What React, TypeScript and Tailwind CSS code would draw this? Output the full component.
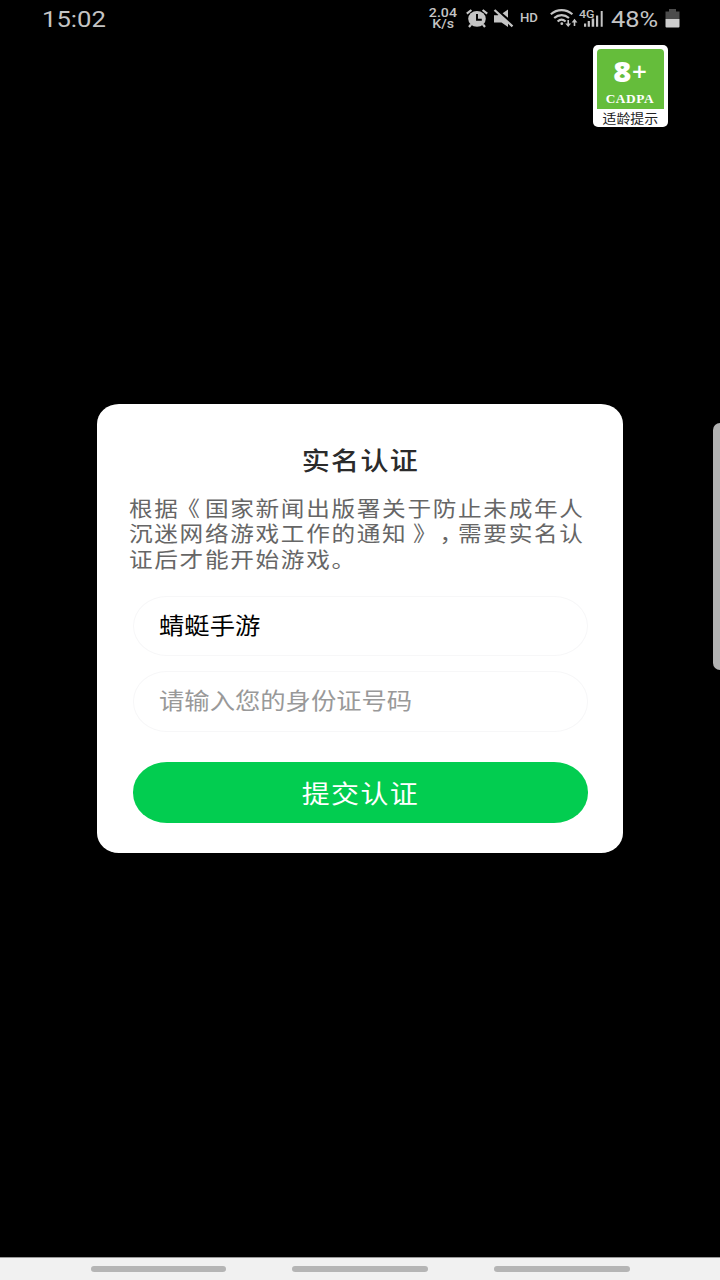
import { useState } from 'react'
import type { ReactNode } from 'react'

const NAV_KEYS = ['recents', 'home', 'back']

function StatusBar() {
  return (
    <header className="flex h-[38px] shrink-0 items-center pl-[42px] font-[Roboto,sans-serif] text-[#c4c4c4]">
      <span className="w-[386px] text-[22.5px] leading-none">
        <span className="inline-block origin-left scale-x-[1.14]">15:02</span>
      </span>
      <span className="mr-[3px] flex w-[30px] flex-col items-center text-[12px] leading-[11px] font-medium">
        <span className="inline-block scale-x-[1.18]">2.04</span>
        <span className="inline-block scale-x-[1.18]">K/s</span>
      </span>
      {/* Alarm */}
      <svg className="ml-[5px] h-[20px] w-[22px]" viewBox="0 0 22 20">
        <ellipse cx="11" cy="9.8" rx="8.8" ry="7.9" fill="#c4c4c4" />
        <path d="M.8 4.6 5.4 1M21.2 4.6 16.6 1M5 15.5 3 18M17 15.5 19 18" stroke="#c4c4c4" strokeWidth="2.2" />
        <path d="M11 5v5.8h4.8" fill="none" stroke="#000" strokeWidth="1.9" />
      </svg>
      {/* Muted speaker */}
      <svg className="ml-[5px] h-[20px] w-[21px]" viewBox="0 0 21 20">
        <path d="M1 6.3h4l1-.8 9 8V18l-6.5-4.6H1zM9.6 4.2 15 .4v8.4z" fill="#c4c4c4" />
        <path d="M1.5 1 19.5 17.3" stroke="#c4c4c4" strokeWidth="2.3" />
      </svg>
      <span className="ml-[6px] w-[30px] text-[12px] leading-none font-medium">
        <span className="inline-block origin-left -translate-y-px scale-x-[1.1]">HD</span>
      </span>
      {/* Wi-Fi */}
      <svg className="h-[20px] w-[28px]" viewBox="0 0 28 20" fill="none" stroke="#c4c4c4">
        <path d="M.8 5.2c6.4-5.4 15.2-5.4 21.6 0M4.2 9c4.4-3.8 10.4-3.8 14.8 0M7.6 12.4c2.4-2.2 5.6-2.2 8 0" strokeWidth="2.1" />
        <circle cx="11.8" cy="14.7" r="1.4" fill="#c4c4c4" stroke="none" />
        <path d="M18.2 11v5.2M24.5 17v-5.2" strokeWidth="1.6" />
        <path d="M15.3 14.4h5.8l-2.9 3.6zM21.6 13.4h5.8l-2.9-3.6z" fill="#c4c4c4" stroke="none" />
      </svg>
      {/* Mobile signal */}
      <svg className="ml-px h-[20px] w-[27px] overflow-visible" viewBox="0 0 27 20">
        <text x="0" y="8.8" fill="#c4c4c4" fontSize="11.5" fontWeight="500" fontFamily="Roboto, sans-serif" textLength="15.5" lengthAdjust="spacingAndGlyphs">4G</text>
        <path d="M5 14.5h2.2v3.3H5zM8.7 12h2.2v5.8H8.7zM12.7 9.6h2.5v8.2h-2.5zM17 6.5h2.2v11.3H17zM21.7 2h2v15.8h-2z" fill="#c4c4c4" />
      </svg>
      <span className="ml-[5px] w-[54px] text-[22.5px] leading-none">
        <span className="inline-block origin-left scale-x-[1.13]">48%</span>
      </span>
      {/* Battery */}
      <svg className="h-[20px] w-[15px]" viewBox="0 0 15 20">
        <path d="M4 0h7v2.5h3.5V10H.5V2.5H4z" fill="#4c4c4c" />
        <path d="M.5 10h14v7.6a1 1 0 0 1-1 1h-12a1 1 0 0 1-1-1z" fill="#cdcdcd" />
      </svg>
    </header>
  )
}

function AgeBadge() {
  return (
    <div className="mt-[7px] mr-[52px] flex h-[82px] w-[75.5px] flex-col items-center self-end rounded-[5px] bg-white px-[4px] pt-[4px]">
      <div className="flex h-[60px] w-full flex-col items-center rounded-t-[4px] bg-[#65bd3b] text-white">
        <div className="flex h-[44px] items-center font-['Open_Sans',sans-serif] leading-none">
          <span className="mr-[2px] inline-block scale-x-[1.1] text-[28px] font-extrabold">8</span>
          <span className="text-[26px] leading-[22px] font-semibold">+</span>
        </div>
        <span className="scale-x-[1.16] font-['Liberation_Serif',serif] text-[11.5px] leading-[12px] font-bold tracking-[0.5px]">CADPA</span>
      </div>
      <span className="scale-x-[1.1] font-['Noto_Sans_CJK_SC',sans-serif] text-[12.7px] leading-[18px] whitespace-nowrap text-[#222]">适龄提示</span>
    </div>
  )
}

function NoticeLine({ children }: { children: ReactNode }) {
  return (
    <span className="block origin-left scale-x-[1.125] tracking-[1.5px] whitespace-nowrap">{children}</span>
  )
}

export default function App() {
  const [name, setName] = useState('蜻蜓手游')
  const [idNumber, setIdNumber] = useState('')

  return (
    <div className="relative flex h-[1280px] w-[720px] flex-col overflow-hidden bg-black">
      <StatusBar />
      <AgeBadge />

      <main className="mx-auto mt-[276.5px] h-[449.5px] w-[526px] rounded-[22px/20px] bg-white px-[35.5px] font-['Noto_Sans_CJK_SC',sans-serif]">
        <h1 className="pt-[37.5px] text-center text-[25px] leading-[36px] font-medium text-[#2b2b2b]">
          <span className="inline-block scale-x-[1.12] tracking-[1.2px]">实名认证</span>
        </h1>

        <p className="mt-[17.5px] -ml-[3.5px] h-[77px] text-[21px] leading-[25.5px] text-[#666] [text-spacing-trim:space-all]">
          <NoticeLine>
            根据<span className="relative -left-[3px]">《</span>国家新闻出版署关于防止未成年人
          </NoticeLine>
          <NoticeLine>
            沉迷网络游戏工作的通知<span className="relative left-[5px]">》</span>
            <span className="relative left-[6px]">，</span>需要实名认
          </NoticeLine>
          <NoticeLine>证后才能开始游戏。</NoticeLine>
        </p>

        <form className="mt-[24px]" onSubmit={e => e.preventDefault()}>
          <div className="h-[60px] rounded-[34px/30px] border-[1.5px] border-[#f7f7f8] pl-[25px]">
            <input
              type="text"
              value={name}
              onChange={e => setName(e.target.value)}
              className="h-[54px] w-[340px] origin-left scale-x-[1.125] text-[22.5px] text-black outline-none"
            />
          </div>
          <div className="mt-[15px] h-[61px] rounded-[34px/30px] border-[1.5px] border-[#f7f7f8] pl-[25px]">
            <input
              type="text"
              value={idNumber}
              onChange={e => setIdNumber(e.target.value)}
              placeholder="请输入您的身份证号码"
              className="h-[54px] w-[340px] origin-left scale-x-[1.125] text-[22.5px] text-black outline-none placeholder:text-[#999]"
            />
          </div>
          <button
            type="submit"
            className="mt-[30px] block h-[61px] w-full rounded-[34px/30px] bg-[#02cd50] text-[25px] leading-[60px] text-white"
          >
            <span className="inline-block scale-x-[1.12] tracking-[1.2px]">提交认证</span>
          </button>
        </form>
      </main>

      {/* Edge panel handle */}
      <div className="absolute top-[423px] right-0 h-[247px] w-[7px] rounded-l-[7px] bg-[#b2b2b2]" />

      <nav className="mt-auto flex h-[23px] items-start justify-between border-t border-[#999] bg-[#f1f1f1] px-[90.5px] pt-[8px]">
        {NAV_KEYS.map(key => (
          <span key={key} className="h-[6px] w-[135.5px] rounded-full bg-[#b5b5b5]" />
        ))}
      </nav>
    </div>
  )
}
